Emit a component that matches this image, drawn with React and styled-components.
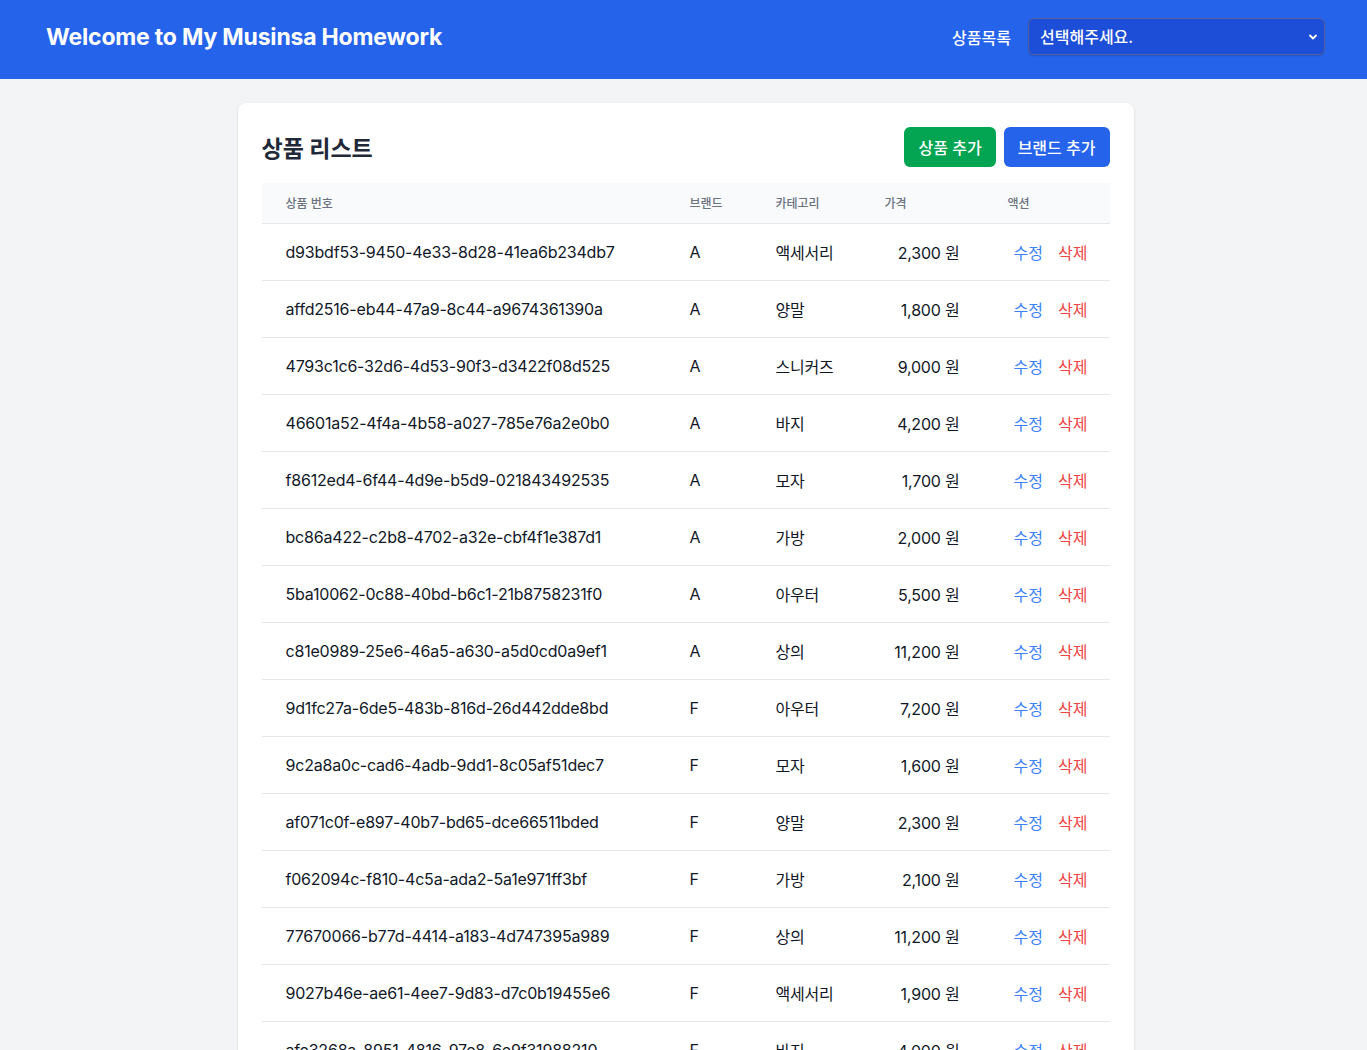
import React from "react";
import styled, { createGlobalStyle } from "styled-components";

const GlobalStyle = createGlobalStyle`
  * { box-sizing: border-box; }
  html, body { margin: 0; padding: 0; }
  body {
    background: #f3f4f6;
    font-family: "Inter", "Noto Sans CJK KR", sans-serif;
    color: #111827;
  }
`;

const Header = styled.header`
  height: 79px;
  background: #2563eb;
  display: flex;
  align-items: center;
  justify-content: space-between;
  padding: 0 42px 6px 46px;
`;

const Logo = styled.h1`
  margin: 0;
  color: #fff;
  font-size: 23px;
  font-weight: 700;
  letter-spacing: -0.2px;
`;

const Nav = styled.div`
  display: flex;
  align-items: center;
  gap: 17px;
`;

const NavLabel = styled.span`
  color: #fff;
  font-size: 16px;
  font-weight: 500;
`;

const SelectWrap = styled.div`
  position: relative;
  width: 297px;
  height: 37px;
`;

const Select = styled.select`
  appearance: none;
  width: 100%;
  height: 100%;
  background: #1d4ed8;
  color: #fff;
  border: 1px solid #55609a;
  border-radius: 6px;
  padding: 0 30px 0 11px;
  font-family: inherit;
  font-size: 16px;
  font-weight: 500;
  box-shadow: 0 1px 2px rgba(0,0,0,0.15);
`;

const Chevron = styled.svg`
  position: absolute;
  right: 6px;
  top: 13px;
  pointer-events: none;
`;

const Main = styled.main`
  display: flex;
  justify-content: center;
  padding: 24px 0 0 4px;
`;

const Card = styled.section`
  width: 896px;
  background: #fff;
  border-radius: 8px;
  box-shadow: 0 1px 3px rgba(0,0,0,0.1), 0 1px 2px rgba(0,0,0,0.06);
  padding: 24px;
`;

const CardHead = styled.div`
  display: flex;
  justify-content: space-between;
  align-items: center;
  margin-bottom: 16px;
`;

const Title = styled.h2`
  margin: 0;
  font-size: 23px;
  font-weight: 700;
  color: #1f2937;
`;

const Buttons = styled.div`
  display: flex;
  gap: 8px;
`;

const Button = styled.button`
  height: 40px;
  padding: 0 14px;
  border: none;
  border-radius: 6px;
  background: ${p => p.$color};
  color: #fff;
  font-family: inherit;
  font-size: 16px;
  font-weight: 500;
`;

const Table = styled.table`
  width: 100%;
  border-collapse: collapse;
  table-layout: fixed;
`;

const Th = styled.th`
  background: #f9fafb;
  height: 40px;
  padding: 0 24px;
  text-align: left;
  font-size: 12px;
  font-weight: 500;
  color: #6b7280;
  border-bottom: 1px solid #e5e7eb;
`;

const Td = styled.td`
  height: 57px;
  padding: ${p => (p.$actions ? "0 0 0 30px" : "0 24px")};
  font-size: 16px;
  letter-spacing: -0.2px;
  color: #111827;
  text-align: ${p => p.$align || "left"};
  border-bottom: 1px solid #e5e7eb;
  white-space: nowrap;
`;

const Action = styled.button`
  background: none;
  border: none;
  padding: 0;
  font-family: inherit;
  font-size: 16px;
  color: ${p => p.$color};
  margin-right: ${p => (p.$last ? "0" : "15px")};
`;

const rows = [
  ["d93bdf53-9450-4e33-8d28-41ea6b234db7", "A", "액세서리", "2,300"],
  ["affd2516-eb44-47a9-8c44-a9674361390a", "A", "양말", "1,800"],
  ["4793c1c6-32d6-4d53-90f3-d3422f08d525", "A", "스니커즈", "9,000"],
  ["46601a52-4f4a-4b58-a027-785e76a2e0b0", "A", "바지", "4,200"],
  ["f8612ed4-6f44-4d9e-b5d9-021843492535", "A", "모자", "1,700"],
  ["bc86a422-c2b8-4702-a32e-cbf4f1e387d1", "A", "가방", "2,000"],
  ["5ba10062-0c88-40bd-b6c1-21b8758231f0", "A", "아우터", "5,500"],
  ["c81e0989-25e6-46a5-a630-a5d0cd0a9ef1", "A", "상의", "11,200"],
  ["9d1fc27a-6de5-483b-816d-26d442dde8bd", "F", "아우터", "7,200"],
  ["9c2a8a0c-cad6-4adb-9dd1-8c05af51dec7", "F", "모자", "1,600"],
  ["af071c0f-e897-40b7-bd65-dce66511bded", "F", "양말", "2,300"],
  ["f062094c-f810-4c5a-ada2-5a1e971ff3bf", "F", "가방", "2,100"],
  ["77670066-b77d-4414-a183-4d747395a989", "F", "상의", "11,200"],
  ["9027b46e-ae61-4ee7-9d83-d7c0b19455e6", "F", "액세서리", "1,900"],
  ["afe3268a-8951-4816-97e8-6e9f31988210", "F", "바지", "4,000"],
  ["b1c2d3e4-1a2b-4c3d-8e9f-0a1b2c3d4e5f", "F", "스니커즈", "9,300"],
];

export default function App() {
  return (
    <>
      <GlobalStyle />
      <Header>
        <Logo>Welcome to My Musinsa Homework</Logo>
        <Nav>
          <NavLabel>상품목록</NavLabel>
          <SelectWrap>
            <Select defaultValue="">
              <option value="">선택해주세요.</option>
            </Select>
            <Chevron width="12" height="12" viewBox="0 0 12 12">
              <path d="M3 4.5 L6 7.5 L9 4.5" fill="none" stroke="#fff" strokeWidth="1.8" strokeLinecap="round" strokeLinejoin="round" />
            </Chevron>
          </SelectWrap>
        </Nav>
      </Header>
      <Main>
        <Card>
          <CardHead>
            <Title>상품 리스트</Title>
            <Buttons>
              <Button $color="#03a552">상품 추가</Button>
              <Button $color="#2563eb">브랜드 추가</Button>
            </Buttons>
          </CardHead>
          <Table>
            <colgroup>
              <col style={{ width: 404 }} />
              <col style={{ width: 86 }} />
              <col style={{ width: 109 }} />
              <col style={{ width: 123 }} />
              <col style={{ width: 126 }} />
            </colgroup>
            <thead>
              <tr>
                <Th>상품 번호</Th>
                <Th>브랜드</Th>
                <Th>카테고리</Th>
                <Th>가격</Th>
                <Th>액션</Th>
              </tr>
            </thead>
            <tbody>
              {rows.map(r => (
                <tr key={r[0]}>
                  <Td>{r[0]}</Td>
                  <Td>{r[1]}</Td>
                  <Td>{r[2]}</Td>
                  <Td $align="right">{r[3]} 원</Td>
                  <Td $actions>
                    <Action $color="#3b82f6">수정</Action>
                    <Action $color="#ef4444" $last>삭제</Action>
                  </Td>
                </tr>
              ))}
            </tbody>
          </Table>
        </Card>
      </Main>
    </>
  );
}
